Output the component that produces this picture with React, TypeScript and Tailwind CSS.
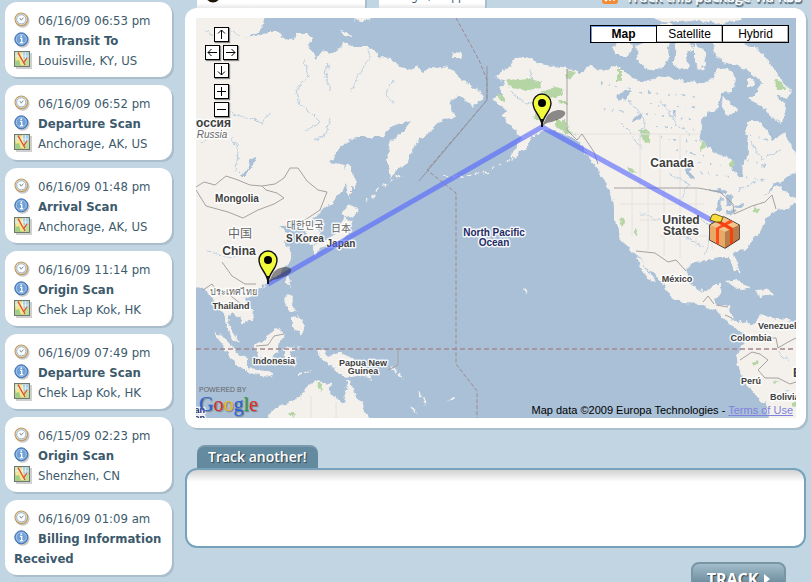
import React, { useState } from 'react';

const events = [
  { time: '06/16/09 06:53 pm', status: 'In Transit To', place: 'Louisville, KY, US' },
  { time: '06/16/09 06:52 pm', status: 'Departure Scan', place: 'Anchorage, AK, US' },
  { time: '06/16/09 01:48 pm', status: 'Arrival Scan', place: 'Anchorage, AK, US' },
  { time: '06/16/09 11:14 pm', status: 'Origin Scan', place: 'Chek Lap Kok, HK' },
  { time: '06/16/09 07:49 pm', status: 'Departure Scan', place: 'Chek Lap Kok, HK' },
  { time: '06/15/09 02:23 pm', status: 'Origin Scan', place: 'Shenzhen, CN' },
  { time: '06/16/09 01:09 am', status: 'Billing Information Received', place: '' },
];

const ClockIcon = () => (
  <svg viewBox="0 0 16 16" className="inline-block h-4 w-4 mr-2 align-[-3px]" aria-hidden="true">
    <circle cx="8.6" cy="8.8" r="7" fill="#c9c9c9" />
    <circle cx="7.3" cy="7.3" r="6.3" fill="#f6e6c8" stroke="#bd9a63" strokeWidth="1.1" />
    <circle cx="7.3" cy="7.3" r="4.6" fill="#fbfdff" stroke="#8fb2d6" strokeWidth="1" />
    <path d="M5.8 6 L7.2 8.2 L9.4 5.6" fill="none" stroke="#7b7f86" strokeWidth="0.9" />
  </svg>
);

const InfoIcon = () => (
  <svg viewBox="0 0 16 16" className="inline-block h-4 w-4 mr-2 align-[-3px]" aria-hidden="true">
    <circle cx="8.6" cy="8.8" r="7" fill="#c9c9c9" />
    <circle cx="7.3" cy="7.3" r="6.5" fill="#5f93cf" stroke="#3f70b0" strokeWidth="1" />
    <circle cx="7.3" cy="7.3" r="5" fill="#6fa1d8" stroke="#b6d0ee" strokeWidth="0.8" />
    <path d="M6 6.4H7.7V10.4M5.8 10.6H9.2" fill="none" stroke="#fff" strokeWidth="1.3" />
    <circle cx="7.3" cy="4.2" r="0.9" fill="#fff" />
  </svg>
);

const MapIcon = () => (
  <svg viewBox="0 0 18 18" className="inline-block h-[18px] w-[18px] mr-[6px] align-[-4px]" aria-hidden="true">
    <path d="M2 2H18V18H2Z" fill="#cfcfcf" />
    <path d="M0.6 0.6H15.4V15.4H0.6Z" fill="#f7e88f" stroke="#6d7a6c" strokeWidth="1.2" />
    <path d="M1.2 1.2H4V7H1.2Z" fill="#d5e8c8" />
    <path d="M8 1.2H14.8V7L10 9Z" fill="#a8d0ee" />
    <path d="M1.2 10L5 9L7 14.8H1.2Z" fill="#9fcf86" />
    <path d="M10 9L14.8 8V14.8H10Z" fill="#bfe09a" />
    <path d="M8.5 1.2V9M11.5 1.2V8M1.2 5H14.8" fill="none" stroke="#fffbe0" strokeWidth="0.6" />
    <path d="M4 1.6L11 14M9.5 12L13 7" fill="none" stroke="#e2493a" strokeWidth="1.3" />
  </svg>
);

const EventCard = ({ time, status, place }: { time: string; status: string; place: string }) => (
  <li className="rounded-xl bg-white pl-[9px] pr-2 pt-[9px] pb-[6px] leading-5 shadow-[2px_2px_0_#a9bdca]">
    <p><ClockIcon />{time}</p>
    <p className="font-bold"><InfoIcon />{status}</p>
    {place && <p><MapIcon />{place}</p>}
  </li>
);

const land = [
  // Eurasia
  'M190 12H267L263 23L262 30L247 38L256 36L268 33L280 33L284 38L295 40L297 33L308 33L311 40L308 48L317 59L322 50L330 53L340 50L343 42L353 47L370 47L378 57L393 58L400 68L413 70L417 67L423 72L430 66L450 68L463 80L477 90L484 97L478 102L472 107L467 100L460 97L450 100L452 108L455 117L443 120L430 130L421 138L412 150L408 163L400 168L390 178L387 160L390 143L403 131L411 121L400 124L393 125L383 137L370 137L357 137L347 142L340 150L330 162L345 165L347 177L343 190L332 203L320 213L313 220L318 230L322 240L313 245L307 242L305 230L297 223L287 225L279 228L288 232L294 233L285 242L290 253L289 263L280 275L268 281L257 290L245 298L253 310L252 318L243 325L240 317L230 313L228 323L235 335L241 344L232 338L227 328L223 312L217 305L210 295L206 290L190 289Z',
  // Sakhalin, Hokkaido, Honshu, Kyushu
  'M346 163L352 166L354 178L356 190L350 187L350 200L346 182Z',
  'M347 203L359 210L350 218L341 214Z',
  'M345 217L351 222L348 236L341 242L332 245L320 248L316 256L312 247L328 239L338 232Z',
  // Taiwan, Philippines
  'M287 276L291 278L289 286L285 282Z',
  'M286 295L293 297L292 305L297 313L288 308L284 302Z',
  'M292 318L299 315L305 326L301 335L292 326Z',
  // Sumatra, Java, Borneo, Sulawesi
  'M214 331L222 336L234 348L247 360L247 370L236 365L226 351Z',
  'M244 368L256 369L273 373L271 377L252 375Z',
  'M254 344L262 342L272 331L276 327L285 334L280 341L278 352L271 360L258 358Z',
  'M284 350L288 346L301 348L290 352L291 357L299 357L292 361L295 369L287 359L284 366Z',
  // New Guinea, Australia
  'M316 350L324 350L328 357L338 352L350 357L364 367L372 379L356 375L346 377L336 371L328 364L320 357Z',
  'M267 424L271 410L288 403L300 398L305 388L316 382L332 384L330 394L343 402L346 385L350 380L355 394L361 402L366 413L374 424Z',
  // Arctic scraps north of Siberia
  'M341 31L350 33L351 37L344 36Z',
  'M346 14H374L370 20L360 22Z',
  'M453 53L462 54L460 58L452 58Z',
  // North America down to Panama
  'M495 78L507 68L517 58L525 57L537 62L550 65L567 68L580 73L592 66L603 71L613 67L620 68L630 77L643 82L655 78L667 76L680 80L697 82L713 80L717 67L728 68L737 80L732 92L722 93L717 107L703 117L700 133L702 142L713 152L730 158L735 173L742 177L743 163L748 150L746 130L747 121L757 121L767 130L773 141L785 133L791 146L800 158V170L777 183L763 195L780 185L787 193L801 200L787 209L776 210L767 218L760 232L747 247L734 254L737 263L740 274L735 271L731 258L717 258L707 262L692 263L687 272L692 285L700 292L710 290L713 285L722 285L721 293L714 298L718 304L731 305L732 317L737 323L747 321L754 327L748 335L741 331L730 325L720 314L700 304L683 303L670 296L662 281L650 272L640 258L633 250L620 240L615 220L613 197L603 180L599 170L590 160L580 143L567 135L550 130L536 134L527 147L510 160L516 148L522 138L516 133L510 125L502 118L507 110L492 100L503 95L500 88L504 80Z',
  // Baja
  'M636 257L642 261L649 273L657 282L651 281L642 271Z',
  // South America
  'M750 327L763 315L777 318L800 323V424H768L767 405L753 395L743 378L737 365L738 352L746 338Z',
  // Canadian Arctic and Baffin
  'M612 46L626 40L632 46L628 56L616 56Z',
  'M634 46L652 40L668 42L670 56L664 68L648 70L636 60L640 52Z',
  'M676 42L690 40L694 50L686 54L690 66L680 72L674 62Z',
  'M694 44L703 48L706 64L700 70L694 62Z',
  'M712 40L735 38L748 44L762 52L776 72L784 84L792 92L788 98L776 94L786 108L782 124L770 116L760 104L748 98L758 92L762 82L750 72L738 66L724 62L714 54Z',
  'M648 14H738L740 20L716 24L700 20L680 22L660 21Z',
  'M724 97L734 106L738 110L728 116L722 108Z',
  'M745 78L753 78L754 86L748 88Z',
  'M652 26L668 22L676 28L660 32Z',
  // Cuba, Hispaniola, Hawaii
  'M726 282L738 280L751 289L742 290Z',
  'M756 290L768 289L774 295L758 297Z',
  'M523 288L528 291L525 294Z',
];

const parks = [
  'M506 79L520 80L528 79L541 81L540 88L528 91L518 88L508 87Z',
  'M542 90L552 89L562 86L563 94L555 98L543 95Z',
  'M558 101L566 101L567 105L560 105Z',
  'M556 120L566 120L568 130L578 134L566 133L556 127Z',
  'M498 94L504 97L504 102L497 98Z',
  'M567 69L574 72L570 81L567 78Z',
  'M535 113L541 114L541 120L536 119Z',
  'M775 79L782 84L785 90L776 90Z',
  'M639 131L648 130L651 143L645 144Z',
  'M618 69L621 69L621 81L618 80Z',
  'M627 166L634 169L636 174L629 171Z',
  'M701 141L705 145L703 150L700 149Z',
  'M730 161L734 160L733 166L730 165Z',
  'M754 206L759 208L758 213L754 211Z',
  'M753 363L758 361L757 365L753 366Z',
  'M773 382L779 380L775 385Z',
  'M791 402L796 400L796 407L791 406Z',
  'M319 384L322 384L321 392L318 388Z',
  'M288 412L294 412L293 417L289 415Z',
  'M621 218L624 220L623 226L620 223Z',
  'M634 228L638 229L637 234L634 233Z',
];

const lakes = [
  'M240 176L245 176L256 158L254 157Z',
  'M709 190L718 187L728 191L722 195Z',
  'M718 200L722 196L721 212L717 212Z',
  'M725 195L734 197L730 206L726 206Z',
  'M726 212L736 209L738 211L728 215Z',
  'M734 206L744 203L745 206L736 208Z',
  'M684 168L688 166L694 178L690 180Z',
  'M617 94L632 90L627 98L616 101Z',
  'M633 117L643 113L640 118L632 122Z',
  'M670 110L676 112L674 116Z',
];

const borders = [
  'M196 187L204 182L215 185L226 176L238 180L250 185L262 186L275 184L284 178L290 168L298 168L307 181L318 190L327 192L320 210L305 220L297 222',
  'M196 190L206 206L228 212L243 218L258 210L274 204L284 198L277 193L266 190L262 186',
  'M567 69V130L577 140L582 134L594 152L598 164',
  'M614 188H698L720 192L733 204L734 214L752 206L765 202L772 195L776 209',
  'M636 251L655 253L668 262L676 260L686 271',
  'M703 302L708 296L714 304M716 305L728 307M725 315L732 318',
  'M740 360L752 352L760 354L768 360L758 370L765 378L778 378L790 384L796 382',
  'M762 338L776 338L778 348L788 342L796 338',
  'M203 290L212 284L220 296L226 292L236 300L244 306M222 262L232 276L245 284L256 284',
  'M256 346L268 345L274 336L284 334',
  'M398 350V365L388 370',
];

const rivers = [
  'M304 60L308 76L296 90L300 104L312 114L320 122L306 130',
  'M328 62L326 76L330 90M370 50L368 62L356 80L352 92',
  'M204 30L218 40L232 30L240 36M270 112L262 122L240 116L226 112',
  'M232 136L238 150L236 172M200 142L214 134',
  'M330 118L326 134L314 140M392 80L386 94L394 104',
  'M628 100L645 120L640 140M660 100L676 124L690 134M618 120L632 134L642 150',
  'M668 172L690 184L680 200M700 216L712 230L706 254M640 214L660 220L690 240L704 246',
  'M776 350L790 362M780 395L790 390M740 190L758 180M752 142L762 160L780 150',
  'M512 92L526 104L546 100M530 70L534 84M246 250L232 258L206 252',
];

type MapLabel = { x: number; y: number; text: string; size: number; anchor?: 'start' | 'middle' | 'end'; tone?: string };

const labels: MapLabel[] = [
  { x: 231, y: 127, text: 'Россия', size: 12, anchor: 'end' },
  { x: 237, y: 202, text: 'Mongolia', size: 10 },
  { x: 239, y: 255, text: 'China', size: 12 },
  { x: 305, y: 242, text: 'S Korea', size: 10 },
  { x: 341, y: 247, text: 'Japan', size: 10 },
  { x: 231, y: 309, text: 'Thailand', size: 9 },
  { x: 274, y: 364, text: 'Indonesia', size: 9 },
  { x: 363, y: 366, text: 'Papua New', size: 9 },
  { x: 363, y: 374, text: 'Guinea', size: 9 },
  { x: 672, y: 167, text: 'Canada', size: 12 },
  { x: 681, y: 224, text: 'United', size: 12 },
  { x: 681, y: 235, text: 'States', size: 12 },
  { x: 677, y: 282, text: 'México', size: 9 },
  { x: 758, y: 329, text: 'Venezuela', size: 9, anchor: 'start' },
  { x: 751, y: 341, text: 'Colombia', size: 9 },
  { x: 751, y: 384, text: 'Perú', size: 9 },
  { x: 770, y: 400, text: 'Bolivia', size: 9, anchor: 'start' },
  { x: 793, y: 377, text: 'Brasil', size: 12, anchor: 'start' },
  { x: 494, y: 236, text: 'North Pacific', size: 10, tone: '#1f2b66' },
  { x: 494, y: 246, text: 'Ocean', size: 10, tone: '#1f2b66' },
  { x: 205, y: 413, text: 'Indian', size: 9, anchor: 'end', tone: '#1f2b66' },
  { x: 205, y: 421, text: 'Ocean', size: 9, anchor: 'end', tone: '#1f2b66' },
];

const Pin = ({ x, y }: { x: number; y: number }) => (
  <g transform={`translate(${x} ${y})`}>
    <path d="M0 0L5 -10C9 -16 20 -18 23 -14C25 -9 14 -5 5 -3Z" fill="#222" opacity="0.5" />
    <path d="M0 -1C-1 -11 -9 -14 -9 -23A9 9 0 0 1 9 -23C9 -14 1 -11 0 -1Z" fill="#f1fb3c" stroke="#111" strokeWidth="1.4" />
    <path d="M0 1V-7" stroke="#111" strokeWidth="2" />
    <circle cx="0" cy="-23" r="4" fill="#000" />
  </g>
);

const Parcel = () => (
  <g strokeLinejoin="round">
    <path d="M710 225L724 217L739 225V239L725 248L710 240Z" fill="#d99a5c" stroke="#1c1208" strokeWidth="1.4" />
    <path d="M710 225L724 217L739 225L725 232Z" fill="#f2c48e" />
    <path d="M710 225L725 232V248L710 240Z" fill="#e8a968" />
    <path d="M725 232L739 225V239L725 248Z" fill="#b87d49" />
    <path d="M716 228L730 220L733 222L719 229V245L716 243Z" fill="#ff4a1a" />
    <path d="M716 222L719 220L733 228V243L730 245V230Z" fill="#f5400f" />
    <path d="M712 215L715 214L723 217L721 222L716 222L710 220Z" fill="#f8dc3a" stroke="#4a3b08" strokeWidth="0.8" />
  </g>
);

const WorldMap = () => (
  <svg viewBox="196 18 600 400" preserveAspectRatio="xMidYMid slice" className="block h-full w-full" role="img" aria-label="Package route">
    <defs>
      <filter id="coast" x="-5%" y="-5%" width="110%" height="110%">
        <feTurbulence type="fractalNoise" baseFrequency="0.14" numOctaves="3" seed="4" result="noise" />
        <feDisplacementMap in="SourceGraphic" in2="noise" scale="7" xChannelSelector="R" yChannelSelector="G" />
      </filter>
    </defs>
    <rect x="196" y="18" width="600" height="400" fill="#a9c0d7" />
    <g filter="url(#coast)">
      <g fill="#f4f1ed">{land.map((d) => <path key={d} d={d} />)}</g>
      <g fill="#b5d5a5">{parks.map((d) => <path key={d} d={d} />)}</g>
      <g fill="#a9c0d7">{lakes.map((d) => <path key={d} d={d} />)}</g>
      <g fill="none" stroke="#b3cade" strokeWidth="0.9">{rivers.map((d) => <path key={d} d={d} />)}</g>
      {/* small lakes across northern Canada */}
      <path
        d="M640 92L700 98M650 104L704 108M646 114L696 120M656 126L696 130M660 138L698 142M676 150L710 156M684 160L724 166M700 172L734 178M750 134L768 140M748 160L772 168M746 176L764 180M600 84L632 88M604 108L626 112"
        fill="none"
        stroke="#b3cade"
        strokeWidth="1.8"
        strokeDasharray="2 7 1 5 3 9"
      />
      <path d="M400 176L380 188L364 206M444 176L462 177L484 173L500 165L510 158" fill="none" stroke="#f4f1ed" strokeWidth="1.5" strokeDasharray="4 4" />
      <path d="M411 408L418 413M450 400L454 397M400 373L404 379M418 392L426 404M392 368L402 376M296 374L312 372" fill="none" stroke="#f4f1ed" strokeWidth="1.8" strokeDasharray="5 2" />
    </g>
    <g fill="none" stroke="#e4e1de" strokeWidth="1">
      <path d="M632 188V236M648 188V250M664 188V256M680 188V258M696 188V246M620 204H704M640 220H712M660 236H720M712 216V250M728 220V250" />
      <path d="M640 134V188M660 134V188M680 134V188M568 134H700M311 396V418M336 402V418" />
    </g>
    <g fill="none" stroke="#a5a1a1" strokeWidth="1">{borders.map((d) => <path key={d} d={d} />)}</g>
    <g fill="none" stroke="#a3868f" strokeWidth="1" strokeDasharray="4 2">
      <path d="M456 18L479 60L487 80V100L427 170L456 193V364L477 391V418" />
      <path d="M196 349H796" strokeWidth="1.5" strokeDasharray="5 3" />
    </g>
    <path d="M487 66V100L419 181" fill="none" stroke="#8f959e" strokeWidth="1" />

    <g textAnchor="middle" stroke="#fff" strokeWidth="3" strokeLinejoin="round" strokeOpacity="0.85" paintOrder="stroke">
      <g className="font-['Liberation_Sans'] font-bold">
        {labels.map(({ x, y, text, size, anchor, tone }) => (
          <text key={text + y} x={x} y={y} fontSize={size} textAnchor={anchor} fill={tone ?? '#404040'}>{text}</text>
        ))}
      </g>
      <text x="212" y="138" fontSize="10" fill="#666" className="font-['Liberation_Sans'] italic">Russia</text>
      <g className="font-['Noto_Sans_CJK_SC',sans-serif]" fill="#666">
        <text x="240" y="238" fontSize="12">中国</text>
        <text x="341" y="232" fontSize="10">日本</text>
        <text x="305" y="229" fontSize="10">대한민국</text>
        <text x="233" y="295" fontSize="9">ประเทศไทย</text>
      </g>
    </g>

    <path d="M268 284L542 127L722 226" fill="none" stroke="#5060ff" strokeOpacity="0.6" strokeWidth="5" strokeLinejoin="round" />
    <Pin x={268} y={283} />
    <Pin x={542} y={126} />
    <Parcel />
  </svg>
);

const arrows = {
  up: 'M6.5 11V2M3 5.5L6.5 2L10 5.5',
  left: 'M11 6.5H2M5.5 3L2 6.5L5.5 10',
  right: 'M2 6.5H11M7.5 3L11 6.5L7.5 10',
  down: 'M6.5 2V11M3 7.5L6.5 11L10 7.5',
  plus: 'M6.5 2V11M2 6.5H11',
  minus: 'M2 6.5H11',
};

const MapButton = ({ label, d }: { label: string; d: string }) => (
  <button type="button" aria-label={label} className="h-[15px] w-[15px] border border-black bg-white shadow-[1px_1px_1px_#888]">
    <svg viewBox="0 0 13 13" className="block h-[13px] w-[13px]" fill="none" stroke="#000" strokeWidth="1">
      <path d={d} />
    </svg>
  </button>
);

const MapPanel = () => {
  const [mode, setMode] = useState('Map');

  return (
    <section className="rounded-xl bg-white py-[10px] pl-[11px] pr-[10px] shadow-[2px_2px_0_#a9bdca]">
      <div className="relative h-[400px] overflow-hidden font-['Liberation_Sans',sans-serif] text-black">
        <WorldMap />

        <div className="absolute left-[9px] top-[9px] flex flex-col items-center gap-[3px]">
          <MapButton label="Pan up" d={arrows.up} />
          <div className="flex gap-[3px]">
            <MapButton label="Pan left" d={arrows.left} />
            <MapButton label="Pan right" d={arrows.right} />
          </div>
          <MapButton label="Pan down" d={arrows.down} />
          <div className="flex flex-col gap-[3px] pt-[3px]">
            <MapButton label="Zoom in" d={arrows.plus} />
            <MapButton label="Zoom out" d={arrows.minus} />
          </div>
        </div>

        <div className="absolute right-[7px] top-[7px] flex gap-px border border-black bg-black">
          {['Map', 'Satellite', 'Hybrid'].map((name) => (
            <button
              key={name}
              type="button"
              onClick={() => setMode(name)}
              className={`h-4 w-[65px] bg-white text-xs leading-4 ${name === mode ? 'font-bold shadow-[inset_1px_1px_0_#6c9ddf]' : 'shadow-[inset_-1px_-1px_0_#b0b0b0]'}`}
            >
              {name}
            </button>
          ))}
        </div>

        <div className="absolute bottom-1 left-[3px]">
          <div className="text-[7px] leading-2 text-[#666]">POWERED BY</div>
          <div className="font-['Liberation_Serif',serif] text-[20px] leading-5 [text-shadow:1px_1px_1px_#777]">
            <span className="text-[#2a62d8]">G</span>
            <span className="text-[#d93025]">o</span>
            <span className="text-[#efb81a]">o</span>
            <span className="text-[#2a62d8]">g</span>
            <span className="text-[#2f9e44]">l</span>
            <span className="text-[#d93025]">e</span>
          </div>
        </div>

        <p className="absolute bottom-0 right-[3px] whitespace-nowrap text-[11px] leading-4">
          Map data ©2009 Europa Technologies - <a href="#terms" className="text-[#8080dd] underline">Terms of Use</a>
        </p>
      </div>
    </section>
  );
};

const TopStrip = () => (
  <div className="flex h-2 items-end overflow-hidden pl-3">
    <div className="flex h-6 w-[168px] items-end bg-linear-to-b from-white from-80% to-[#e8e8e8] pl-2 shadow-[2px_0_0_#a9bdca]">
      <svg viewBox="0 0 16 16" className="mb-[5px] h-4 w-4" aria-hidden="true">
        <circle cx="8" cy="8" r="7.5" fill="#1d1408" />
        <path d="M4 13L8 10L12 13" fill="#f0b62c" />
      </svg>
    </div>
    <div className="ml-[14px] flex h-6 w-[106px] items-end bg-linear-to-b from-white from-80% to-[#e8e8e8] pl-4 pb-[6px] text-xs leading-3 shadow-[2px_0_0_#a9bdca]">
      Origin, Shipper
    </div>
    <a href="#rss" className="ml-auto flex items-end gap-2 pr-1 font-['Open_Sans',sans-serif] text-sm font-semibold leading-4 text-white [text-shadow:1px_2px_1px_#4d6473]">
      <svg viewBox="0 0 16 16" className="mb-1 h-4 w-4" aria-hidden="true">
        <rect width="16" height="16" rx="3" fill="#f58a35" />
        <path d="M3 8A5 5 0 0 1 8 13M3 4A9 9 0 0 1 12 13" fill="none" stroke="#fff" strokeWidth="1.6" />
        <circle cx="4" cy="12" r="1.4" fill="#fff" />
      </svg>
      <span className="pb-[3px]">Track this package via RSS</span>
    </a>
  </div>
);

const TrackForm = () => (
  <form className="pt-[17px]" onSubmit={(e) => e.preventDefault()}>
    <label
      htmlFor="numbers"
      className="ml-3 block h-[23px] w-fit rounded-t-lg border-t-2 border-[#7a99aa] bg-[#648a9f] px-[11px] font-['Open_Sans',sans-serif] text-sm font-semibold leading-5 text-white [text-shadow:1px_1px_1px_#2c4350]"
    >
      Track another!
    </label>
    <textarea
      id="numbers"
      className="block h-20 w-full resize-none rounded-xl border-2 border-[#77a2bb] bg-white bg-linear-to-b from-[#d2d2d2] to-white to-[12px] p-3 outline-none"
    />
    <div className="flex justify-end pr-5 pt-[14px]">
      <button
        type="submit"
        className="flex h-[34px] w-[95px] items-center justify-center gap-[6px] rounded-lg border-2 border-[#7896a4] bg-linear-to-b from-[#a3bdcb] to-[#4f7386] font-['Open_Sans',sans-serif] text-base font-bold text-white [text-shadow:1px_1px_1px_#2c4350]"
      >
        TRACK
        <svg viewBox="0 0 6 10" className="h-[10px] w-[6px]" fill="#fff" aria-hidden="true"><path d="M0 0L6 5L0 10Z" /></svg>
      </button>
    </div>
  </form>
);

export default function App() {
  return (
    <div className="flex h-screen gap-[13px] overflow-hidden bg-[#c2d5e2] px-[5px] font-['DejaVu_Sans_Condensed','DejaVu_Sans',sans-serif] text-[13px] text-[#3d5a6c]">
      <aside className="w-[167px] shrink-0 pt-[2px]">
        <ul className="flex flex-col gap-2">
          {events.map((event) => (
            <EventCard key={event.time + event.status} {...event} />
          ))}
        </ul>
      </aside>
      <main className="min-w-0 flex-1">
        <TopStrip />
        <MapPanel />
        <TrackForm />
      </main>
    </div>
  );
}
